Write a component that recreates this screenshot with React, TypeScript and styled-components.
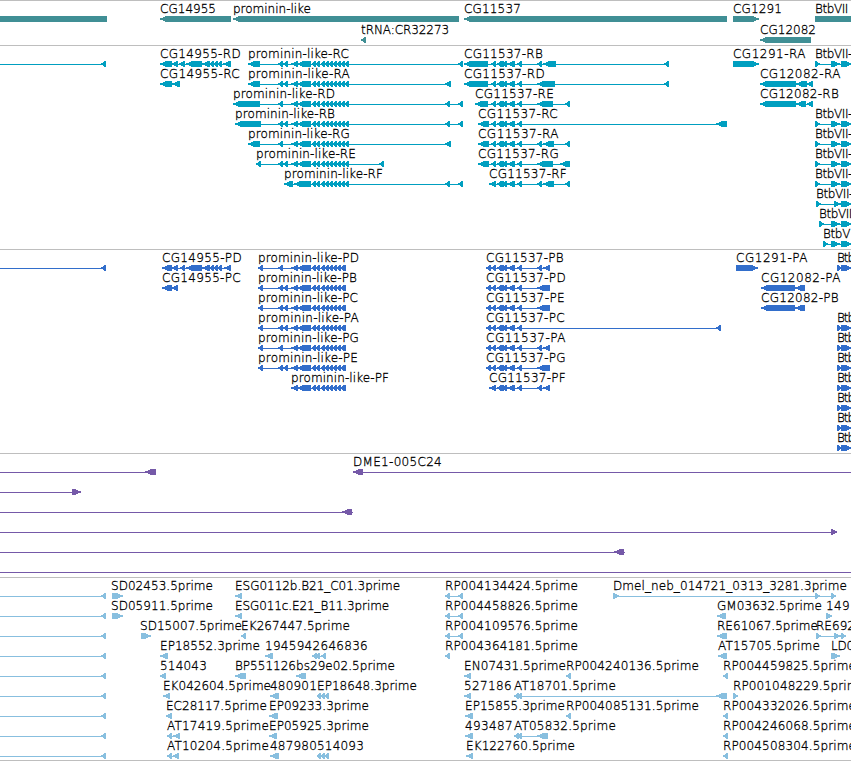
import React from 'react';
import styled, { createGlobalStyle } from 'styled-components';

type Dir = 'l' | 'r' | 'n';
type Span = [number, number];
interface Caption { x: number; end: number; text: string }
interface Glyph { dir: Dir; spans: Span[]; line?: Span }
interface RowData { captions: Caption[]; glyphs: Glyph[] }

const WIDTH = 851;
const FONT = '200 12px "DejaVu Sans"';

const GlobalStyle = createGlobalStyle`
  body { margin: 0; background: #fff; overflow: hidden; }
`;

const Browser = styled.main`
  display: flex;
  flex-direction: column;
  width: ${WIDTH}px;
  height: 761px;
  box-sizing: border-box;
  overflow: hidden;
  background: #fff;
  border-bottom: 1px solid #bebebe;
`;

const TrackPanel = styled.section<{ $height: number }>`
  display: flex;
  flex-direction: column;
  flex: none;
  box-sizing: border-box;
  height: ${(p) => p.$height}px;
  border-top: 1px solid #bebebe;
`;

const TrackRow = styled.div<{ $height: number }>`
  position: relative;
  flex: none;
  height: ${(p) => p.$height}px;
`;

const FeatureName = styled.span<{ $x: number; $spacing: number }>`
  position: absolute;
  top: 1px;
  left: ${(p) => p.$x}px;
  font: 200 12px/15px "DejaVu Sans", Verdana, sans-serif;
  letter-spacing: ${(p) => p.$spacing}px;
  white-space: pre;
  color: #000;
  -webkit-text-stroke: 0.3px #000;
`;

const Drawing = styled.svg`
  position: absolute;
  left: 0;
  top: 15px;
  display: block;
`;

let pen: CanvasRenderingContext2D | null = null;
function spacingFor(text: string, width: number) {
  pen = pen || document.createElement('canvas').getContext('2d');
  if (!pen) return 0;
  pen.font = FONT;
  return Math.round(((width - pen.measureText(text).width) / text.length) * 1000) / 1000;
}

// Outline of one exon: a six pixel bar whose leading end is a stepped arrow head.
function exonPath(a: number, b: number, dir: Dir) {
  if (dir === 'n') return `M${a} 0H${b}V6H${a}Z`;
  const h = Math.max(1, Math.min(5, b - a - 2));
  const insets = [h, Math.round(h * 0.5), 0, Math.round(h * 0.2), Math.round(h * 0.5), h];
  return insets
    .map((n, y) => (dir === 'l' ? `M${a + n} ${y}H${b}v1H${a + n}Z` : `M${a} ${y}H${b - n}v1H${a}Z`))
    .join('');
}

function Row({ data, height, color }: { data: RowData; height: number; color: string }) {
  return (
    <TrackRow $height={height}>
      {data.captions.map((c) => (
        <FeatureName key={c.text + c.x} $x={c.x} $spacing={spacingFor(c.text, c.end - c.x)}>
          {c.text}
        </FeatureName>
      ))}
      <Drawing width={WIDTH} height={6} fill={color} shapeRendering="crispEdges">
        {data.glyphs.map((g, i) => {
          const from = g.line ? g.line[0] : Math.min(...g.spans.map((s) => s[0]));
          const to = g.line ? g.line[1] : Math.max(...g.spans.map((s) => s[1]));
          return (
            <path
              key={i}
              d={`M${from} 3H${to}v1H${from}Z` + g.spans.map((s) => exonPath(s[0], s[1], g.dir)).join('')}
            />
          );
        })}
      </Drawing>
    </TrackRow>
  );
}

const cap = (x: number, end: number, text: string): Caption => ({ x, end, text });
const left = (...spans: Span[]): Glyph => ({ dir: 'l', spans });
const right = (...spans: Span[]): Glyph => ({ dir: 'r', spans });
const row = (captions: Caption[] = [], glyphs: Glyph[] = []): RowData => ({ captions, glyphs });

// Genes
const genes: RowData[] = [
  row(
    [cap(160, 216, 'CG14955'), cap(233, 311, 'prominin-like'), cap(464, 521, 'CG11537'), cap(733, 782, 'CG1291'), cap(815, 848, 'BtbVII')],
    [
      { dir: 'n', spans: [[0, 107]] },
      left([160, 231]), left([233, 459]), left([464, 727]), right([733, 759]),
      { dir: 'n', spans: [[815, 851]] },
    ],
  ),
  row([cap(361, 449, 'tRNA:CR32273'), cap(760, 816, 'CG12082')], [left([361, 366]), left([760, 811])]),
];

// Transcripts
const core: Span[] = [[291, 298], [297, 311], [312, 316], [316, 320]];
const comb: Span[] = [[321, 325], [325, 329], [329, 333], [333, 337], [336, 341], [340, 345]];
const pair: Span[] = [[278, 283], [283, 288]];
const single: Span[] = [[278, 283]];
const tail: Span[] = [[445, 450], [458, 463]];
const mid: Span[] = [[491, 496], [497, 502], [500, 504], [503, 507], [507, 515], [517, 522]];
const rCore: Span[] = [...core, ...comb, [344, 349]];
const btb = (x: number, second: number) => right([x, x + 5], [second, second === 834 ? 841 : 840], [841, 852]);
const edge = (end: number): Glyph => ({ dir: 'l', spans: [[end - 5, end]], line: [0, end] });

const transcripts: RowData[] = [
  row(
    [cap(160, 241, 'CG14955-RD'), cap(248, 349, 'prominin-like-RC'), cap(464, 543, 'CG11537-RB'), cap(733, 806, 'CG1291-RA'), cap(815, 852, 'BtbVII-')],
    [
      edge(106),
      left([160, 172], [172, 178], [179, 185], [186, 202], [202, 210], [210, 214], [214, 218], [218, 222], [223, 231]),
      left([248, 260], ...pair, ...rCore, [458, 463]),
      left([464, 488], ...mid, [537, 542], [543, 556], [664, 669]),
      right([733, 759]), btb(815, 831),
    ],
  ),
  row(
    [cap(160, 240, 'CG14955-RC'), cap(248, 350, 'prominin-like-RA'), cap(464, 545, 'CG11537-RD'), cap(760, 841, 'CG12082-RA')],
    [
      left([160, 172], [172, 180]), left([248, 260], ...pair, ...rCore, [445, 451]),
      left([464, 488], ...mid, [537, 555], [664, 669]), left([760, 796], [796, 807], [807, 813]),
    ],
  ),
  row(
    [cap(233, 335, 'prominin-like-RD'), cap(475, 554, 'CG11537-RE'), cap(760, 839, 'CG12082-RB')],
    [
      left([233, 260], ...single, ...rCore, ...tail),
      left([475, 488], ...mid, [537, 553], [565, 570]), left([760, 796], [796, 806], [807, 813]),
    ],
  ),
  row(
    [cap(235, 335, 'prominin-like-RB'), cap(478, 558, 'CG11537-RC'), cap(815, 852, 'BtbVII-')],
    [left([235, 261], ...pair, ...rCore, ...tail), left([478, 489], ...mid, [716, 727]), btb(815, 831)],
  ),
  row(
    [cap(248, 350, 'prominin-like-RG'), cap(478, 559, 'CG11537-RA'), cap(815, 852, 'BtbVII-')],
    [
      left([248, 260], ...single, ...rCore, [445, 451]),
      left([478, 489], ...mid, [537, 542], [543, 554], [565, 570]), btb(815, 831),
    ],
  ),
  row(
    [cap(256, 356, 'prominin-like-RE'), cap(478, 559, 'CG11537-RG'), cap(815, 852, 'BtbVII-')],
    [
      left([256, 261], ...pair, ...rCore, [379, 384]),
      left([478, 489], ...mid, [537, 553], [560, 570]), btb(815, 831),
    ],
  ),
  row(
    [cap(284, 383, 'prominin-like-RF'), cap(489, 567, 'CG11537-RF'), cap(815, 852, 'BtbVII-')],
    [
      left([284, 293], [294, 311], ...core.slice(2), ...comb, [344, 349], ...tail),
      left([489, 496], ...mid.slice(1), [537, 542], [543, 554], [565, 570]), btb(815, 831),
    ],
  ),
  row([cap(816, 853, 'BtbVII-')], [btb(816, 834)]),
  row([cap(819, 852, 'BtbVII')], [btb(819, 831)]),
  row([cap(823, 850, 'BtbV')], [btb(823, 831)]),
];

// Proteins
const pTail: Span[] = [...core, ...comb, [342, 346]];
const pMid: Span[] = [[486, 491], ...mid];
const pBtb = right([837, 841], [841, 852]);
const btbCap = cap(837, 854, 'Btb');

const proteins: RowData[] = [
  row(
    [cap(162, 242, 'CG14955-PD'), cap(258, 359, 'prominin-like-PD'), cap(486, 564, 'CG11537-PB'), cap(736, 808, 'CG1291-PA'), btbCap],
    [
      edge(106),
      left([162, 172], [172, 178], [180, 185], [186, 202], [202, 210], [210, 214], [214, 218], [218, 222], [224, 231]),
      left([258, 263], ...single, ...pTail), left(...pMid, [537, 542], [543, 550]), right([736, 758]), pBtb,
    ],
  ),
  row(
    [cap(162, 241, 'CG14955-PC'), cap(258, 357, 'prominin-like-PB'), cap(486, 566, 'CG11537-PD'), cap(761, 841, 'CG12082-PA')],
    [left([162, 172], [172, 178]), left([258, 263], ...pair, ...pTail), left(...pMid, [537, 550]), left([761, 795], [795, 805])],
  ),
  row(
    [cap(258, 358, 'prominin-like-PC'), cap(486, 565, 'CG11537-PE'), cap(761, 839, 'CG12082-PB')],
    [left([258, 263], ...pair, ...pTail), left(...pMid, [537, 550]), left([761, 795], [795, 805])],
  ),
  row(
    [cap(258, 359, 'prominin-like-PA'), cap(486, 565, 'CG11537-PC'), btbCap],
    [left([258, 263], ...pair, ...pTail), left(...pMid, [716, 721]), pBtb],
  ),
  row(
    [cap(258, 359, 'prominin-like-PG'), cap(486, 566, 'CG11537-PA'), btbCap],
    [left([258, 263], ...single, ...pTail), left(...pMid, [537, 542], [543, 550]), pBtb],
  ),
  row(
    [cap(258, 358, 'prominin-like-PE'), cap(486, 566, 'CG11537-PG'), btbCap],
    [left([258, 263], ...pair, ...pTail), left(...pMid, [537, 550]), pBtb],
  ),
  row(
    [cap(291, 389, 'prominin-like-PF'), cap(489, 566, 'CG11537-PF'), btbCap],
    [left(...pTail), left([489, 496], ...mid.slice(1), [537, 542], [543, 550]), pBtb],
  ),
  row([btbCap], [pBtb]),
  row([btbCap], [pBtb]),
  row([btbCap], [pBtb]),
];

// Genomic clones
const clones: RowData[] = [
  row([cap(353, 442, 'DME1-005C24')], [
    { dir: 'l', spans: [[145, 156]], line: [0, 156] },
    { dir: 'l', spans: [[353, 363]], line: [353, 851] },
  ]),
  row([], [{ dir: 'r', spans: [[72, 81]], line: [0, 81] }]),
  row([], [{ dir: 'l', spans: [[342, 352]], line: [0, 353] }]),
  row([], [{ dir: 'r', spans: [[831, 837]], line: [0, 837] }]),
  row([], [{ dir: 'l', spans: [[614, 624]], line: [0, 625] }]),
  row([], [{ dir: 'n', spans: [], line: [0, 851] }]),
];

// Expressed sequence tags
const trio = left([317, 321], [321, 325], [324, 329]);
const ests: RowData[] = [
  row(
    [cap(111, 213, 'SD02453.5prime'), cap(235, 400, 'ESG0112b.B21_C01.3prime'), cap(445, 578, 'RP004134424.5prime'), cap(613, 847, 'Dmel_neb_014721_0313_3281.3prime')],
    [right([112, 123]), left([235, 242]), left([445, 450], [458, 463]), right([613, 619], [815, 820], [831, 836])],
  ),
  row(
    [cap(111, 213, 'SD05911.5prime'), cap(235, 389, 'ESG011c.E21_B11.3prime'), cap(445, 578, 'RP004458826.5prime'), cap(717, 822, 'GM03632.5prime'), cap(826, 850, '149')],
    [right([112, 123]), left([235, 242]), left([445, 450], [458, 463]), left([717, 726]), right([826, 832])],
  ),
  row(
    [cap(140, 242, 'SD15007.5prime'), cap(241, 350, 'EK267447.5prime'), cap(445, 578, 'RP004109576.5prime'), cap(717, 818, 'RE61067.5prime'), cap(816, 855, 'RE692')],
    [right([141, 151]), left([241, 246]), left([445, 450], [458, 463]), left([717, 727]), right([816, 821], [834, 841], [841, 846])],
  ),
  row(
    [cap(160, 260, 'EP18552.3prime'), cap(265, 368, '1945942646836'), cap(445, 578, 'RP004364181.5prime'), cap(718, 820, 'AT15705.5prime'), cap(831, 854, 'LD0')],
    [left([160, 168]), left([265, 273]), left([312, 317], [316, 320], [321, 326]), left([445, 450]), left([718, 727]), right([831, 840])],
  ),
  row(
    [cap(160, 207, '514043'), cap(235, 296, 'BP551126'), cap(296, 395, 'bs29e02.5prime'), cap(464, 566, 'EN07431.5prime'), cap(566, 699, 'RP004240136.5prime'), cap(723, 856, 'RP004459825.5prime')],
    [left([160, 166]), left([235, 246]), left([296, 306]), left([464, 471]), left([566, 571]), left([723, 728])],
  ),
  row(
    [cap(163, 271, 'EK042604.5prime'), cap(270, 317, '480901'), cap(317, 417, 'EP18648.3prime'), cap(464, 512, '527186'), cap(514, 616, 'AT18701.5prime'), cap(733, 866, 'RP001048229.5prime')],
    [left([163, 170]), left([270, 279]), trio, left([464, 471]), left([514, 519], [518, 522], [716, 727]), right([733, 738])],
  ),
  row(
    [cap(166, 267, 'EC28117.5prime'), cap(269, 369, 'EP09233.3prime'), cap(465, 565, 'EP15855.3prime'), cap(566, 699, 'RP004085131.5prime'), cap(723, 856, 'RP004332026.5prime')],
    [left([166, 172]), left([269, 278]), left([465, 473]), left([566, 571]), left([723, 728])],
  ),
  row(
    [cap(167, 269, 'AT17419.5prime'), cap(269, 369, 'EP05925.3prime'), cap(465, 513, '493487'), cap(514, 616, 'AT05832.5prime'), cap(723, 856, 'RP004246068.5prime')],
    [left([167, 172], [173, 180]), left([269, 277]), left([465, 473]), left([514, 519], [518, 522], [537, 548]), left([723, 728])],
  ),
  row(
    [cap(167, 269, 'AT10204.5prime'), cap(270, 317, '487980'), cap(317, 364, '514093'), cap(466, 575, 'EK122760.5prime'), cap(723, 856, 'RP004508304.5prime')],
    [left([167, 172], [173, 179]), left([270, 279]), trio, left([466, 473]), left([723, 728])],
  ),
].map((r) => ({ ...r, glyphs: [edge(106), ...r.glyphs] }));

const tracks = [
  { name: 'genes', height: 45, pitch: 21, color: '#408f95', rows: genes },
  { name: 'transcripts', height: 204, pitch: 20, color: '#009fc0', rows: transcripts },
  { name: 'proteins', height: 204, pitch: 20, color: '#326ecb', rows: proteins },
  { name: 'clones', height: 124, pitch: 20, color: '#7559a8', rows: clones },
  { name: 'ests', height: 183, pitch: 20, color: '#88bfdf', rows: ests },
];

export default function App() {
  return (
    <>
      <GlobalStyle />
      <Browser>
        {tracks.map((t) => (
          <TrackPanel key={t.name} $height={t.height}>
            {t.rows.map((r, i) => (
              <Row key={i} data={r} height={t.pitch} color={t.color} />
            ))}
          </TrackPanel>
        ))}
      </Browser>
    </>
  );
}
